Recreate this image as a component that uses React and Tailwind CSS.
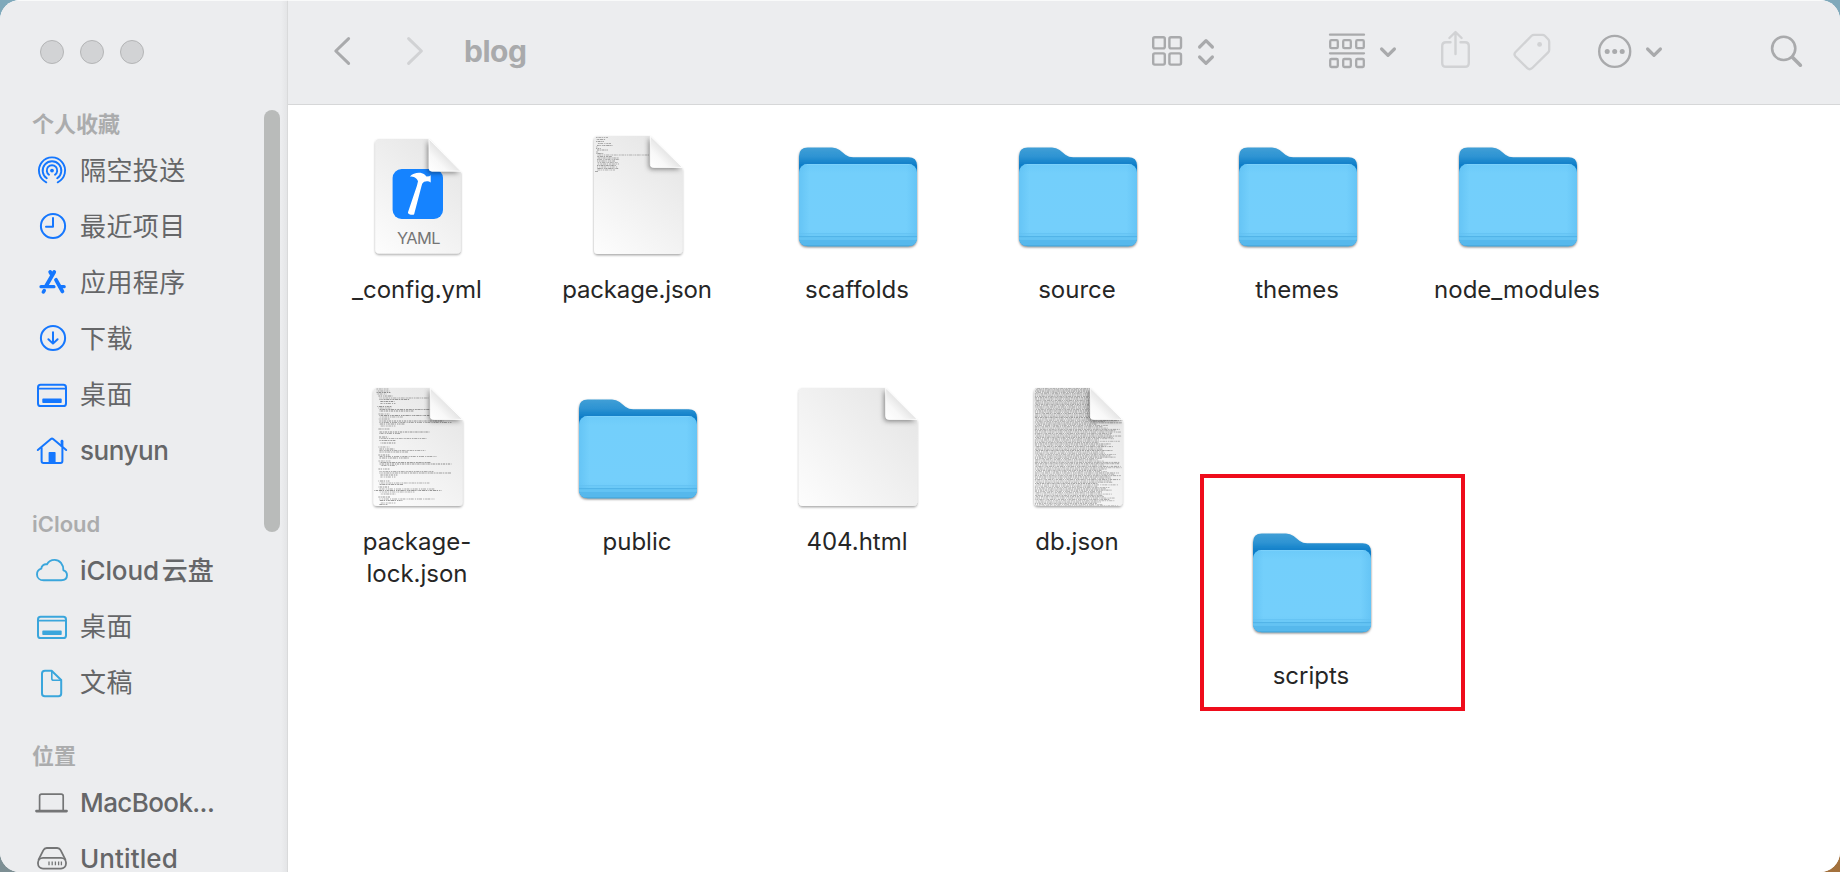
import React from "react";

const LATIN = "font-['Inter','Noto_Sans_CJK_SC',sans-serif]";

/* ---------- sidebar icons (32 x 32 box) ---------- */

function SideIcon({ children, color }) {
  return (
    <svg
      width="32"
      height="32"
      viewBox="0 0 32 32"
      fill="none"
      stroke={color}
      strokeWidth="2"
      strokeLinecap="round"
      strokeLinejoin="round"
      className="shrink-0 overflow-visible"
    >
      {children}
    </svg>
  );
}

const AirDrop = ({ color }) => (
  <SideIcon color={color}>
    <path d="M10.3 27.3A13.1 13.1 0 1 1 21.7 27.3" strokeWidth="1.9" />
    <path d="M10.8 23.3A9.3 9.3 0 1 1 21.2 23.3" strokeWidth="1.9" />
    <path d="M13 19.7A5.2 5.2 0 1 1 19 19.7" strokeWidth="1.9" />
    <circle cx="16" cy="15.6" r="1.9" fill={color} stroke="none" />
  </SideIcon>
);

const Clock = ({ color }) => (
  <SideIcon color={color}>
    <circle cx="17" cy="15" r="12.1" />
    <path d="M17 7V15.8H10" />
  </SideIcon>
);

const Apps = ({ color }) => (
  <SideIcon color={color}>
    <path d="M18.2 5L10.2 18.8" strokeWidth="3.8" />
    <path d="M5 19.7H18" strokeWidth="3.2" />
    <path d="M8.2 23.6L7.4 24.9" strokeWidth="3.6" />
    <path d="M19.4 12.6L26.2 24.6" stroke="#ecedef" strokeWidth="6" strokeLinecap="butt" />
    <path d="M14.2 5L15.6 7.4" strokeWidth="3.8" />
    <path d="M20 12.8L26.4 24.4" strokeWidth="3.8" />
    <path d="M24 19.7H28.2" strokeWidth="3.2" />
  </SideIcon>
);

const Download = ({ color }) => (
  <SideIcon color={color}>
    <circle cx="17" cy="15" r="12.1" />
    <path d="M17 9.2V20.4M12.4 16.2L17 20.6L21.6 16.2" />
  </SideIcon>
);

const Desktop = ({ color }) => (
  <SideIcon color={color}>
    <rect x="2" y="5.8" width="28" height="21.2" rx="2.6" />
    <path d="M2.5 9.6H29.5" strokeWidth="1.6" />
    <rect x="6.3" y="19.6" width="19.4" height="4.4" rx="0.8" fill={color} stroke="none" />
  </SideIcon>
);

const Home = ({ color }) => (
  <SideIcon color={color}>
    <path d="M1.8 15L14.9 4.1Q16 3.2 17.1 4.1L30.2 15" />
    <path d="M5.6 13V26Q5.6 27.9 7.5 27.9H24.5Q26.4 27.9 26.4 26V13" />
    <path d="M26 6.2V11" strokeWidth="2.8" />
    <path d="M12.6 28V17.8Q12.6 17 13.4 17H18.8Q19.6 17 19.6 17.8V28Z" fill={color} stroke="none" />
  </SideIcon>
);

const Cloud = ({ color }) => (
  <SideIcon color={color}>
    <path d="M7.6 25.3H25.2C28.8 25.3 31 23.2 31 20.3C31 17.9 29.6 16 27.4 15.4C27.6 9.4 23.6 4.9 18.6 4.9C15 4.9 12.4 6.6 11 9.3C8 8.7 5.4 10.8 5.3 13.7C2.6 14.5 1 16.7 1 19.4C1 22.8 3.8 25.3 7.6 25.3Z" strokeWidth="1.9" />
  </SideIcon>
);

const Doc = ({ color }) => (
  <SideIcon color={color}>
    <path d="M9 3.8H15.6L25.2 13V26.4Q25.2 29.2 22.4 29.2H8.8Q6 29.2 6 26.4V6.6Q6 3.8 9 3.8Z" />
    <path d="M15.8 4.4V11.4Q15.8 13.2 17.6 13.2H24.8" strokeWidth="1.6" />
  </SideIcon>
);

const Laptop = ({ color }) => (
  <SideIcon color={color}>
    <path d="M3.6 23.4V9.2Q3.6 7.2 5.6 7.2H25.2Q27.2 7.2 27.2 9.2V23.4" strokeWidth="1.7" />
    <path d="M0.4 24.1H30.6" strokeWidth="2.6" />
  </SideIcon>
);

const Drive = ({ color }) => (
  <SideIcon color={color}>
    <path d="M2.6 16.6L7.4 7.2Q8.4 5 10.8 5H21.2Q23.6 5 24.6 7.2L29.4 16.6" strokeWidth="1.8" />
    <rect x="2" y="14.8" width="28" height="10.8" rx="5" strokeWidth="1.8" />
    <path d="M13 18.4V22.2M16.2 18.4V22.2M19.4 18.4V22.2M22.6 18.4V22.2M25.4 18.4V22.2" strokeWidth="1.3" strokeLinecap="butt" />
  </SideIcon>
);

const BLUE = "#1577fe";
const TEAL = "#3aa6dc";
const GREY = "#747576";

const SECTIONS = [
  {
    title: "个人收藏",
    color: BLUE,
    items: [
      ["隔空投送", AirDrop, "tracking-[0.4px]"],
      ["最近项目", Clock, "tracking-[0.4px]"],
      ["应用程序", Apps, "tracking-[0.4px]"],
      ["下载", Download, "tracking-[0.4px]"],
      ["桌面", Desktop, "tracking-[0.4px]"],
      ["sunyun", Home, "font-[450] tracking-[-0.45px]"],
    ],
  },
  {
    title: "iCloud",
    color: TEAL,
    items: [
      ["iCloud 云盘", Cloud, "font-[450] tracking-[-0.1px] [word-spacing:-4px]"],
      ["桌面", Desktop, "tracking-[0.4px]"],
      ["文稿", Doc, "tracking-[0.4px]"],
    ],
  },
  {
    title: "位置",
    color: GREY,
    items: [
      ["MacBook...", Laptop, "font-[450] tracking-[-0.6px]"],
      ["Untitled", Drive, "font-[450] tracking-[0.1px]"],
    ],
  },
];

function Sidebar() {
  return (
    <aside className="relative flex w-[288px] shrink-0 flex-col border-r border-[#d9dadb] bg-[#ecedef]">
      <div className="flex h-[105px] shrink-0 items-start gap-4 pt-10 pl-10">
        <span className="size-6 rounded-full border border-[#b4b5b6] bg-[#d2d3d5]" />
        <span className="size-6 rounded-full border border-[#b4b5b6] bg-[#d2d3d5]" />
        <span className="size-6 rounded-full border border-[#b4b5b6] bg-[#d2d3d5]" />
      </div>
      <nav className="flex flex-col gap-[26px]">
        {SECTIONS.map((s) => (
          <section key={s.title}>
            <h2 className="flex h-[38px] items-center pl-8 text-[22px] leading-none font-semibold text-[#abacad]">
              {s.title}
            </h2>
            <ul>
              {s.items.map(([label, Icon, type]) => (
                <li key={label} className="flex h-14 items-center gap-3 pl-9">
                  <Icon color={s.color} />
                  <span className={`text-[26px] leading-6 whitespace-nowrap text-[#656668] ${type}`}>
                    {label}
                  </span>
                </li>
              ))}
            </ul>
          </section>
        ))}
      </nav>
      <div className="absolute top-[110px] right-[7px] h-[422px] w-4 rounded-full bg-[#b9bbba]" />
      <div className="absolute inset-y-0 right-0 w-[6px] bg-linear-to-r from-transparent to-[#e4e5e7]" />
    </aside>
  );
}

/* ---------- toolbar ---------- */

function ToolIcon({ box, className = "", color = "#a9aaac", children }) {
  const [x, w] = box;
  return (
    <svg
      width={w}
      height="44"
      viewBox={`${x} 30 ${w} 44`}
      fill="none"
      stroke={color}
      strokeWidth="2.6"
      strokeLinecap="round"
      strokeLinejoin="round"
      className={`shrink-0 overflow-visible ${className}`}
    >
      {children}
    </svg>
  );
}

const FAINT = "#d1d2d4";

function Toolbar() {
  return (
    <header className="flex h-[105px] shrink-0 items-start border-b border-[#d6d7d8] bg-[#ecedef] pt-[30px] pl-[44px]">
      <ToolIcon box={[332, 20]}>
        <path d="M348.6 38.6L335.8 51L348.6 63.4" strokeWidth="3" />
      </ToolIcon>
      <ToolIcon box={[406, 20]} className="ml-[54px]" color={FAINT}>
        <path d="M408.6 38.6L421.4 51L408.6 63.4" strokeWidth="3" />
      </ToolIcon>
      <h1 className="ml-[38px] w-[80px] text-[30px] leading-[43px] font-bold tracking-[-0.5px] text-[#a9aaac]">
        blog
      </h1>

      <ToolIcon box={[1152, 62]} className="ml-[608px]">
        <rect x="1153.2" y="37.2" width="11.6" height="11.2" rx="1.6" strokeWidth="2.4" />
        <rect x="1169.4" y="37.2" width="11.6" height="11.2" rx="1.6" strokeWidth="2.4" />
        <rect x="1153.2" y="53.4" width="11.6" height="11.2" rx="1.6" strokeWidth="2.4" />
        <rect x="1169.4" y="53.4" width="11.6" height="11.2" rx="1.6" strokeWidth="2.4" />
        <path d="M1199.6 47L1206 40.6L1212.4 47M1199.6 57L1206 63.4L1212.4 57" strokeWidth="3.2" />
      </ToolIcon>

      <ToolIcon box={[1329, 68]} className="ml-[115px]">
        <path d="M1330 34.7H1364M1330 53.3H1364" strokeWidth="2.3" />
        {[1330.2, 1343.2, 1356.2].map((x) => (
          <g key={x} strokeWidth="2.3">
            <rect x={x} y="40.2" width="7.6" height="8" rx="1.2" />
            <rect x={x} y="59" width="7.6" height="8" rx="1.2" />
          </g>
        ))}
        <path d="M1381.6 49L1388 55.4L1394.4 49" strokeWidth="3.2" />
      </ToolIcon>

      <ToolIcon box={[1441, 30]} className="ml-[44px]" color={FAINT}>
        <path d="M1450.5 42.3H1446Q1442.2 42.3 1442.2 46V63Q1442.2 66.8 1446 66.8H1465Q1468.8 66.8 1468.8 63V46Q1468.8 42.3 1465 42.3H1460.5" strokeWidth="2.4" />
        <path d="M1455.5 54V32.5M1449.4 38L1455.5 32L1461.6 38" strokeWidth="2.4" />
      </ToolIcon>

      <ToolIcon box={[1513, 38]} className="ml-[42px]" color={FAINT}>
        <path d="M1534 34.8H1542.4Q1543.8 34.8 1544.8 35.8L1548.2 39.3Q1549.2 40.3 1549.2 41.8V50Q1549.2 51.4 1548.2 52.4L1532 68.2Q1529.6 70.4 1527.3 68.2L1515.6 56.6Q1513.4 54.3 1515.6 52L1531.6 35.8Q1532.6 34.8 1534 34.8Z" strokeWidth="2.3" />
        <circle cx="1539.6" cy="44.4" r="2.4" fill={FAINT} stroke="none" />
      </ToolIcon>

      <ToolIcon box={[1598, 64]} className="ml-[47px]">
        <circle cx="1614.7" cy="51.4" r="15.5" strokeWidth="2.4" />
        <g fill="#a9aaac" stroke="none">
          <circle cx="1607.2" cy="51.4" r="2.5" />
          <circle cx="1614.7" cy="51.4" r="2.5" />
          <circle cx="1622.2" cy="51.4" r="2.5" />
        </g>
        <path d="M1647.6 49L1654 55.4L1660.4 49" strokeWidth="3.2" />
      </ToolIcon>

      <ToolIcon box={[1771, 32]} className="ml-[109px]">
        <circle cx="1783.7" cy="48.4" r="11.6" strokeWidth="2.6" />
        <path d="M1792.4 57.2L1800.4 65.2" strokeWidth="3.6" />
      </ToolIcon>
    </header>
  );
}

/* ---------- file icons (122 x 120 box) ---------- */

function Folder() {
  return (
    <svg width="122" height="120" viewBox="0 0 122 120" className="block shrink-0 overflow-visible">
      <defs>
        <linearGradient id="folderBack" x1="0" y1="12" x2="0" y2="30" gradientUnits="userSpaceOnUse">
          <stop offset="0" stopColor="#419fd6" />
          <stop offset="0.5" stopColor="#2e94d3" />
          <stop offset="1" stopColor="#0d7dc8" />
        </linearGradient>
        <linearGradient id="folderFront" x1="0" y1="28" x2="0" y2="111" gradientUnits="userSpaceOnUse">
          <stop offset="0" stopColor="#6bcaf9" />
          <stop offset="0.12" stopColor="#73cffb" />
          <stop offset="0.8" stopColor="#74cffb" />
          <stop offset="1" stopColor="#68c8f6" />
        </linearGradient>
        <linearGradient id="folderSide" x1="3" y1="0" x2="121" y2="0" gradientUnits="userSpaceOnUse">
          <stop offset="0" stopColor="#57baf0" stopOpacity="0.5" />
          <stop offset="0.09" stopColor="#57baf0" stopOpacity="0" />
          <stop offset="0.91" stopColor="#57baf0" stopOpacity="0" />
          <stop offset="1" stopColor="#57baf0" stopOpacity="0.5" />
        </linearGradient>
        <filter id="folderShadow" x="-10%" y="-10%" width="120%" height="125%">
          <feDropShadow dx="0" dy="1.3" stdDeviation="1.3" floodColor="#000" floodOpacity="0.5" />
        </filter>
        <clipPath id="folderClip">
          <rect x="3" y="28.8" width="118" height="82.2" rx="8.5" />
        </clipPath>
      </defs>
      <g transform="translate(0 0.3)">
        <path
          d="M3 40V21Q3 12.2 11.8 12.2H36Q40.4 12.2 43.6 14.8L49.4 19.4Q52.8 22 57.2 22H112.4Q121 22 121 30.4V102Q121 110.8 112.2 110.8H11.8Q3 110.8 3 102Z"
          fill="url(#folderBack)"
          filter="url(#folderShadow)"
        />
        <g clipPath="url(#folderClip)">
          <rect x="3" y="28.6" width="118" height="83" fill="url(#folderFront)" />
          <rect x="3" y="28.6" width="118" height="83" fill="url(#folderSide)" />
          <rect x="3" y="28.8" width="118" height="1" fill="#8fd9fd" fillOpacity="0.5" />
          <rect x="3" y="98" width="118" height="1" fill="#63c1f1" />
          <rect x="3" y="100.6" width="118" height="1.6" fill="#52b4e8" />
          <rect x="3" y="102.2" width="118" height="2.4" fill="#64c3f3" />
          <rect x="3" y="104.6" width="118" height="7" fill="#56b8ec" />
          <rect x="3" y="110" width="118" height="1.4" fill="#46a7dc" />
        </g>
      </g>
    </svg>
  );
}

/* x0/x1: page edges, y0/y1: top and bottom, fx/fy: inner corner of the folded flap */
function Page({ id, x0, x1, y0 = 1, y1 = 119, fx, fy = 32.4, print, children }) {
  const outline = `M${x0 + 4} ${y0}H${fx}L${x1} ${fy + 1}V${y1 - 4}Q${x1} ${y1} ${x1 - 4} ${y1}H${x0 + 4}Q${x0} ${y1} ${x0} ${y1 - 4}V${y0 + 4}Q${x0} ${y0} ${x0 + 4} ${y0}Z`;
  const flap = `M${fx} ${y0}L${x1} ${fy}H${fx + 3}Q${fx} ${fy} ${fx} ${fy - 3}Z`;
  return (
    <svg width="122" height="120" viewBox="0 0 122 120" className="block shrink-0 overflow-visible">
      <defs>
        <linearGradient id={`${id}-paper`} x1={x0} y1={y1} x2={x1} y2={y0 + 14} gradientUnits="userSpaceOnUse">
          <stop offset="0" stopColor="#fdfdfd" />
          <stop offset="0.5" stopColor="#f1f1f1" />
          <stop offset="1" stopColor="#e5e5e5" />
        </linearGradient>
        <linearGradient id={`${id}-flap`} x1={fx} y1={fy} x2={(fx + x1) / 2 + 2} y2={(y0 + fy) / 2 - 2} gradientUnits="userSpaceOnUse">
          <stop offset="0" stopColor="#ffffff" />
          <stop offset="0.5" stopColor="#f8f8f8" />
          <stop offset="1" stopColor="#e0e0e0" />
        </linearGradient>
        <filter id={`${id}-drop`} x="-10%" y="-10%" width="120%" height="125%">
          <feDropShadow dx="0" dy="1.3" stdDeviation="1.3" floodColor="#000" floodOpacity="0.36" />
        </filter>
        <filter id={`${id}-soft`} x="-40%" y="-40%" width="180%" height="180%">
          <feGaussianBlur stdDeviation="2.4" />
        </filter>
        <clipPath id={`${id}-clip`}>
          <path d={outline} />
        </clipPath>
      </defs>
      <path d={outline} fill={`url(#${id}-paper)`} filter={`url(#${id}-drop)`} />
      <g clipPath={`url(#${id}-clip)`}>
        {print}
        {children}
        <path d={flap} transform="translate(-1.5 1.8)" fill="#000" fillOpacity="0.45" filter={`url(#${id}-soft)`} />
      </g>
      <path d={flap} fill={`url(#${id}-flap)`} stroke="#fff" strokeWidth="0.9" />
    </svg>
  );
}

const YamlFile = () => (
  <Page id="yaml" x0={19.3} x1={104.8} y0={4} y1={118.4} fx={73} fy={36.2}>
    <rect x="36.6" y="34" width="50.4" height="50" rx="9" fill="#1583ff" />
    <path d="M53.9 41.4C57.5 37.6 64.5 36.6 68.6 39.4L70.5 41.6L73.2 41.2L74.7 40.2V47.4L73 46.6C70.6 45.8 67.4 46.4 66.2 48.8L65.4 51.6L58.2 79C57.4 80.9 51.8 79.4 51.9 77.4L61 50.6L62 46.2C60.8 42.8 57.6 41.4 53.9 41.4Z" fill="#fff" />
    <text x="62.4" y="109" textAnchor="middle" fontFamily="Inter, sans-serif" fontSize="16.4" letterSpacing="-0.6" fill="#757575">
      YAML
    </text>
  </Page>
);

/* Rows of print too small to read: [y, x, length] */
const PACKAGE_ROWS = [
  [2.5, 2, 12], [4.5, 2, 10], [6.5, 2, 8], [8.5, 3, 14], [10.5, 3, 16], [12, 2, 2], [13.5, 2, 5],
  [15, 3, 11], [17, 2, 3], [18.5, 2, 8], [20, 3, 52], [21.5, 3, 15], [23, 3, 22], [24.5, 3, 23],
  [26, 3, 18], [27.5, 3, 21], [29, 3, 22], [30.5, 3, 19], [32, 3, 21], [33.5, 3, 22], [35, 3, 18], [36.5, 1, 3],
];

const LOCK_ROWS = [
  [2, 3, 12], [4, 3, 13], [5.5, 3, 14], [7, 3, 10], [9, 5, 14], [11, 6, 49], [12.5, 6, 30], [14.5, 7, 14], [16.5, 7, 15],
  [19.5, 4, 14], [21, 5, 13], [22.5, 6, 56], [24, 6, 34], [27, 5, 11], [28.5, 6, 50], [30, 6, 24], [32, 5, 12],
  [34, 6, 64], [35.5, 6, 72], [37, 6, 25], [39, 7, 15], [42, 5, 11], [45, 6, 50], [46.5, 6, 22], [50, 5, 10],
  [51.5, 6, 47], [53.5, 6, 16], [56, 7, 15], [60, 5, 11], [62, 6, 15], [63.5, 6, 46], [65, 6, 29], [68, 5, 11],
  [69.5, 6, 57], [71, 6, 30], [74, 5, 12], [75.5, 6, 51], [77, 6, 72], [78.5, 7, 16], [82, 5, 11], [84.5, 6, 54],
  [86, 6, 72], [88, 7, 17], [90, 7, 15], [94, 5, 11], [96, 6, 50], [97.5, 6, 24], [100, 5, 11], [102, 6, 55],
  [103.5, 1, 67], [105, 6, 35], [107, 7, 15], [110, 5, 12], [112, 6, 55], [113.5, 6, 23], [116, 7, 15], [117.5, 6, 8],
];

const DASHES = [
  "1.6 .7 3 .6 1 .8",
  "2.4 .8 1.2 .7",
  "1 .6 2 .8 3.4 .6 1.3 1.1",
  "3.2 .7 1.4 .9 2 .6",
  "1.1 .9 1.7 .5 2.9 1.2",
];

function Print({ rows, left, opacity, width = 0.9 }) {
  return (
    <g stroke="#2b2b2b" strokeWidth={width}>
      {rows.map(([y, x, len], i) => (
        <line
          key={i}
          x1={left + x}
          x2={left + x + len}
          y1={y}
          y2={y}
          strokeOpacity={opacity * (0.82 + ((i * 7) % 5) * 0.08)}
          strokeDasharray={DASHES[(i * 3) % 5]}
          strokeDashoffset={(i * 5) % 7}
        />
      ))}
    </g>
  );
}

const DB_ROWS = Array.from({ length: 90 }, (_, i) => [
  1.5 + i * 1.32,
  0.8,
  i < 25 ? 88 : 62 + ((i * 37 + ((i * i) % 11) * 5) % 26),
]);

const PackageFile = () => (
  <Page id="pkg" x0={18} x1={106.4} fx={74.3} print={<Print rows={PACKAGE_ROWS} left={18} opacity={0.42} />} />
);
const LockFile = () => (
  <Page id="lock" x0={17.4} x1={106.6} fx={74.3} print={<Print rows={LOCK_ROWS} left={17.4} opacity={0.48} />} />
);
const HtmlFile = () => <Page id="html" x0={2.8} x1={121.2} fx={89.7} />;
const DbFile = () => (
  <Page id="db" x0={18} x1={106.4} fx={74.3} print={<Print rows={DB_ROWS} left={18} opacity={0.42} width={0.85} />} />
);

const FILES = [
  ["_config.yml", YamlFile],
  ["package.json", PackageFile],
  ["scaffolds", Folder],
  ["source", Folder],
  ["themes", Folder],
  ["node_modules", Folder],
  ["package-lock.json", LockFile],
  ["public", Folder],
  ["404.html", HtmlFile],
  ["db.json", DbFile],
];

function FileItem({ name, Icon }) {
  const spacing = name === "package.json" ? "tracking-[-0.15px]" : "tracking-normal";
  return (
    <figure className="flex flex-col items-center">
      <Icon />
      <figcaption className={`mt-[19px] max-w-[170px] text-center text-[24px] leading-8 text-[#262626] ${spacing}`}>
        {name}
      </figcaption>
    </figure>
  );
}

export default function App() {
  return (
    <div className="flex h-[872px] w-[1840px] flex-col overflow-hidden bg-linear-to-r from-[#7d8f94] to-[#a3713d]">
      <div className="h-[872px] bg-linear-to-b from-[#7fa9bb] from-50% to-transparent to-50%">
        <div className={`relative flex h-full overflow-hidden rounded-[20px] bg-white ${LATIN}`}>
          <Sidebar />
          <div className="flex min-w-0 flex-1 flex-col">
            <Toolbar />
            <main className="relative flex-1 bg-white pt-[30px] pl-[19px]">
              <div className="grid auto-rows-[252px] grid-cols-[repeat(6,220px)]">
                {FILES.map(([name, Icon]) => (
                  <FileItem key={name} name={name} Icon={Icon} />
                ))}
              </div>
              {/* freely placed folder with its highlight frame */}
              <div className="absolute top-[369px] left-[912px] h-[237px] w-[265px] border-4 border-[#ef0c1b] pt-[43px] pl-[46px]">
                <div className="w-[122px]">
                  <FileItem name="scripts" Icon={Folder} />
                </div>
              </div>
            </main>
          </div>
          <div className="absolute inset-x-0 top-0 h-px bg-white/70" />
        </div>
      </div>
    </div>
  );
}
